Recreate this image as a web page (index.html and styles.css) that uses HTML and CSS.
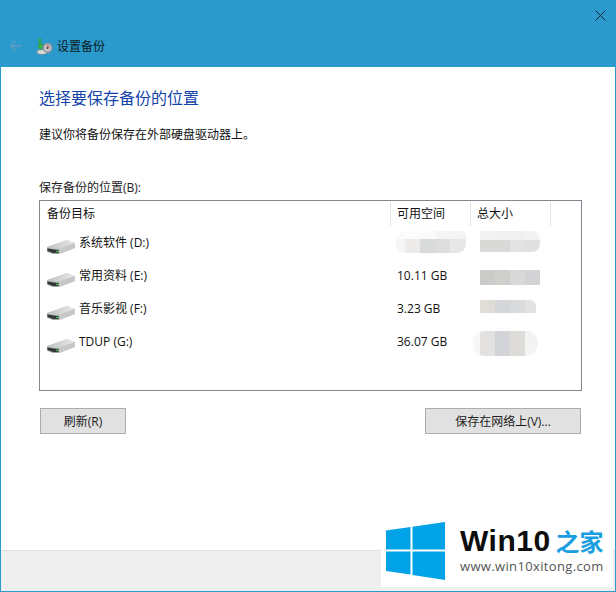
FILE: index.html
```html
<!DOCTYPE html>
<html lang="zh-CN">
<head>
<meta charset="utf-8">
<title>设置备份</title>
<link rel="stylesheet" href="styles.css">
</head>
<body>
<div class="window">
  <header class="titlebar">
    <svg class="close" width="11" height="11" viewBox="0 0 11 11"><path d="M.5 .5L10.5 10.5M10.5 .5L.5 10.5" stroke="#0d2a3a" stroke-width="1" fill="none"/></svg>
    <div class="titlerow">
      <svg class="back" width="14" height="12" viewBox="0 0 14 12"><path d="M13 6H1.5M6.5 1L1.5 6L6.5 11" stroke="#5d9fc0" stroke-width="1.3" fill="none"/></svg>
      <svg class="appicon" width="17" height="17" viewBox="0 0 17 17">
        <ellipse cx="6" cy="14" rx="5" ry="2.4" fill="#d8d8d8" stroke="#777" stroke-width=".5"/>
        <circle cx="11.5" cy="10" r="5" fill="#9a9aa2"/>
        <circle cx="11.5" cy="10" r="3.2" fill="#c9c9d0"/>
        <path d="M11 6.5L13.5 9L11.5 10Z" fill="#c0505a"/>
        <circle cx="11.5" cy="10" r="1.1" fill="#444"/>
        <path d="M2.5 1L4.5 .5L5 7L7.5 6.5L4.5 12L1.5 7.5L3.5 7.5Z" fill="#3fbf3f" stroke="#1d7a2a" stroke-width=".4"/>
      </svg>
      <span class="titletext">设置备份</span>
    </div>
  </header>
  <main class="content">
    <h1 class="heading">选择要保存备份的位置</h1>
    <p class="intro">建议你将备份保存在外部硬盘驱动器上。</p>
    <div class="fieldlabel">保存备份的位置(B):</div>
    <section class="listbox">
      <div class="row head">
        <div class="col name">备份目标</div>
        <div class="col free sep">可用空间</div>
        <div class="col total sep">总大小</div>
        <div class="col rest sep"></div>
      </div>
      <div class="row item">
        <div class="col name drive">
          <svg class="disk" width="30" height="16" viewBox="0 0 30 16"><use href="#hdd"/></svg>
          <span class="dname">系统软件 (D:)</span>
        </div>
        <div class="col free"></div><div class="col total"></div>
      </div>
      <div class="row item">
        <div class="col name drive">
          <svg class="disk" width="30" height="16" viewBox="0 0 30 16"><use href="#hdd"/></svg>
          <span class="dname">常用资料 (E:)</span>
        </div>
        <div class="col free">10.11 GB</div><div class="col total"></div>
      </div>
      <div class="row item">
        <div class="col name drive">
          <svg class="disk" width="30" height="16" viewBox="0 0 30 16"><use href="#hdd"/></svg>
          <span class="dname">音乐影视 (F:)</span>
        </div>
        <div class="col free">3.23 GB</div><div class="col total"></div>
      </div>
      <div class="row item">
        <div class="col name drive">
          <svg class="disk" width="30" height="16" viewBox="0 0 30 16"><use href="#hdd"/></svg>
          <span class="dname">TDUP (G:)</span>
        </div>
        <div class="col free">36.07 GB</div><div class="col total"></div>
      </div>
      <div class="blur b1"></div>
      <div class="blur b2"></div>
      <div class="blur b3"></div>
      <div class="blur b4"></div>
      <div class="blur b5"></div>
    </section>
    <div class="buttons">
      <button class="btn refresh">刷新(R)</button>
      <button class="btn network">保存在网络上(V)...</button>
    </div>
  </main>
  <footer class="footer"></footer>
  <div class="watermark">
    <svg class="winlogo" width="59" height="60" viewBox="0 0 59 60">
      <path d="M0 9.5L24.5 6V28.5H0Z M26.5 5.7L59 1V28.5H26.5Z M0 30.5H24.5V53.5L0 50Z M26.5 30.5H59V59L26.5 54Z" fill="#00a2e8"/>
    </svg>
    <div class="wmtext">
      <div class="wmtop"><span class="wmwin">Win10</span><span class="wmcn">之家</span></div>
      <div class="wmurl">www.win10xitong.com</div>
    </div>
  </div>
</div>
<svg class="defs" width="0" height="0">
  <defs>
    <linearGradient id="top" x1="0" y1="0" x2="1" y2="0"><stop offset="0" stop-color="#bfc1c1"/><stop offset="1" stop-color="#e8e8e8"/></linearGradient>
    <g id="hdd">
      <path d="M1 8L21 1L29 4V9L14 15H7L1 12.5Z" fill="#d8d9d9"/>
      <path d="M1 8L21 1L29 4L13 9.5H7Z" fill="url(#top)"/>
      <path d="M13 9.5L29 4V9L13 15Z" fill="#c6c7c7"/>
      <path d="M1 8.2L7 9.8H13V15H7L1 12.5Z" fill="#a5a6a6"/>
      <path d="M1.5 9.5L12.5 11.2V14H7L1.5 12Z" fill="#34383a"/>
      <rect x="10" y="11.8" width="2" height="1.3" fill="#35c24a"/>
    </g>
  </defs>
</svg>
</body>
</html>
```
FILE: styles.css
```css
* { box-sizing: border-box; }
html, body { margin: 0; padding: 0; }
body { font-family: "Open Sans", "Noto Sans CJK SC", sans-serif; font-size: 12px; color: #111; background: #fff; }
.window { position: relative; width: 616px; height: 592px; display: flex; flex-direction: column; border: 1px solid #2b9acc; border-top: 0; overflow: hidden; background: #fff; }
.titlebar { position: relative; height: 67px; flex: none; background: #2a99cb; margin: 0 -1px; display: flex; align-items: flex-end; padding: 0 0 12px 8px; }
.close { position: absolute; top: 10px; right: 10px; }
.titlerow { display: flex; align-items: center; height: 18px; }
.back { margin: 0 0 0 1px; }
.appicon { margin-left: 13px; }
.titletext { margin: 2px 0 0 4px; line-height: 18px; color: #0a1a22; }
.content { flex: 1; padding: 0 34px 0 38px; display: flex; flex-direction: column; min-height: 0; }
.heading { margin: 20px 0 0; font-size: 16px; font-weight: 400; line-height: 22px; color: #1343ab; }
.intro { margin: 17px 0 0; line-height: 18px; }
.fieldlabel { margin: 36px 0 0; line-height: 16px; color: #222; }
.listbox { position: relative; margin-top: 4px; width: 543px; height: 191px; border: 1px solid #85858f; padding-top: 1px; }
.row { display: flex; }
.head { height: 24px; line-height: 23px; }
.item { height: 33px; }
.col { flex: none; padding-left: 7px; }
.name { width: 350px; }
.free { width: 80px; }
.total { width: 80px; }
.rest { width: 1px; padding: 0; }
.sep { border-left: 1px solid #e4e5e6; padding-left: 6px; }
.item .free { padding-left: 7px; padding-top: 8px; line-height: 18px; }
.drive { display: flex; align-items: flex-start; padding-left: 6px; }
.disk { margin-top: 13px; flex: none; }
.dname { margin: 8px 0 0 3px; line-height: 18px; white-space: nowrap; }
.blur { position: absolute; }
.b1 { left: 356px; top: 30px; width: 70px; height: 22px; border-radius: 9px 4px 9px 9px; background:
  linear-gradient(90deg, #f6f6f6 0 9px, #ecebea 9px 24px, #d9dbda 24px 39px, #dddddd 39px 54px, #e7e7e7 54px 100%) 0 8px / 70px 14px no-repeat,
  linear-gradient(90deg, #fbfbfb 0 40px, #f5f5f5 40px 100%); }
.b2 { left: 440px; top: 30px; width: 60px; height: 21px; border-radius: 0 8px 8px 0; background:
  linear-gradient(90deg, #d9d9d8 0 30px, #e3e3e3 30px 45px, #dfe0df 45px 100%) 0 9px / 60px 12px no-repeat,
  linear-gradient(90deg, #f2f2f2 0 15px, #f0f0f0 15px 45px, #f3f3f3 45px 100%); }
.b3 { left: 440px; top: 69px; width: 60px; height: 15px; background: linear-gradient(90deg, #cbcbca 0 15px, #cfcfcc 15px 30px, #d8d8d8 30px 45px, #d3d3d6 45px 100%); }
.b4 { left: 440px; top: 99px; width: 56px; height: 13px; border-radius: 0 6px 0 0; background: linear-gradient(90deg, #e0dcd7 0 15px, #d4d6da 15px 30px, #d9dadb 30px 45px, #e2e2e3 45px 100%); }
.b5 { left: 433px; top: 130px; width: 65px; height: 25px; border-radius: 12px 12px 14px 12px; background: linear-gradient(90deg, #f7f7f7 0 7px, #e3e2e1 7px 22px, #d3d4d8 22px 37px, #dedcd9 37px 52px, #f3f3f3 52px 100%); }
.buttons { display: flex; justify-content: space-between; width: 541px; margin: 17px 0 0 1px; }
.btn { height: 26px; padding: 1px 0 0; border: 1px solid #adadad; background: #e1e1e1; font: inherit; color: #222; line-height: 22px; }
.refresh { width: 86px; }
.network { width: 156px; }
.footer { height: 41px; flex: none; background: #efefef; border-top: 1px solid #dfdfdf; }
.watermark { position: absolute; left: 380px; top: 519px; width: 232px; height: 68px; background: #fff; display: flex; align-items: flex-start; padding: 1px 0 0 5px; }
.winlogo { flex: none; margin-top: 1px; }
.wmtext { margin-left: 15px; padding-top: 9px; }
.wmtop { display: flex; align-items: center; height: 24px; }
.wmwin { font-family: "Liberation Sans", sans-serif; font-weight: 700; font-size: 30px; line-height: 24px; letter-spacing: .5px; color: #0e0e0e; }
.wmcn { margin-left: 5px; font-family: "Noto Sans CJK SC", sans-serif; font-size: 24px; line-height: 24px; font-weight: 700; color: #1a9ee0; }
.wmurl { margin-top: 6px; font-family: "Open Sans", sans-serif; font-size: 13px; line-height: 15px; color: #555; letter-spacing: .35px; white-space: nowrap; }
.defs { position: absolute; }
```
